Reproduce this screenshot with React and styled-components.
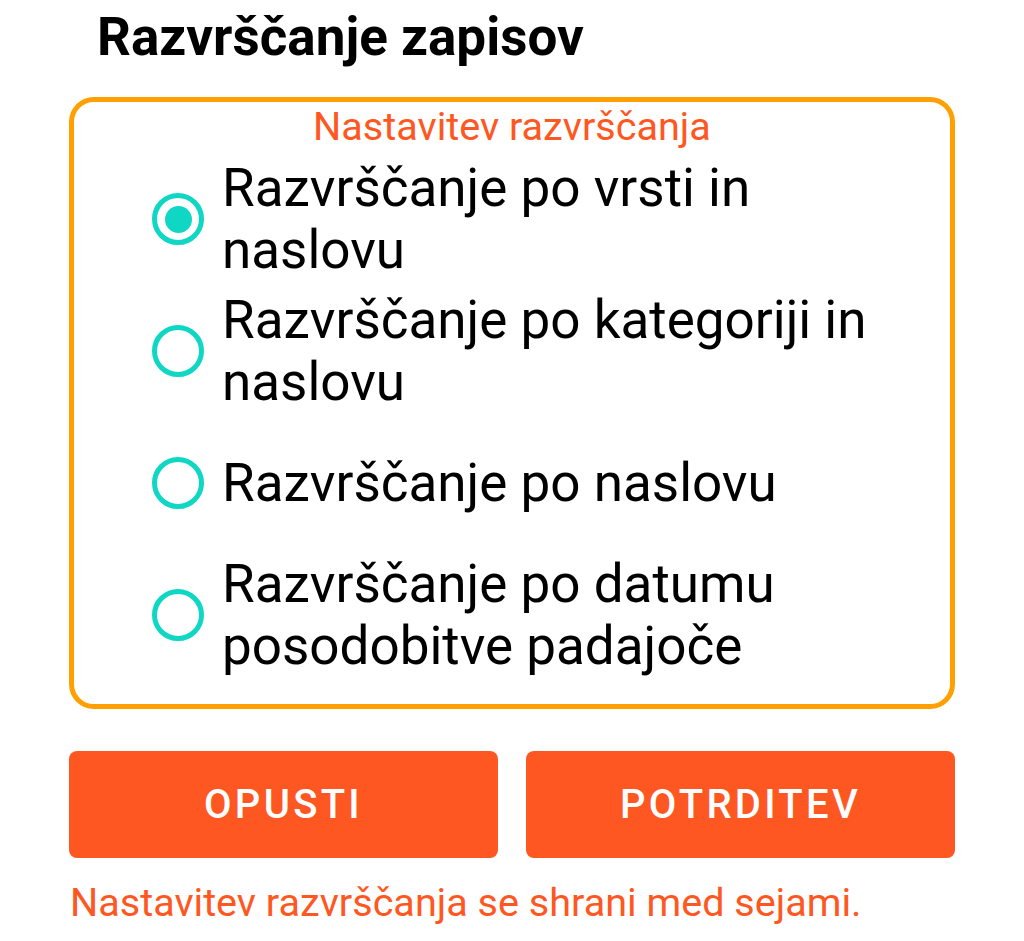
import styled, { createGlobalStyle } from 'styled-components'

const GlobalStyle = createGlobalStyle`
  body {
    margin: 0;
    background: #fff;
    font-family: Roboto, "Noto Sans", sans-serif;
  }
`

const Dialog = styled.div`
  width: 1024px;
  box-sizing: border-box;
  padding: 0 69px;
`

const Title = styled.h1`
  margin: 0;
  padding: 6px 0 0 28px;
  font-size: 53px;
  font-weight: 700;
  line-height: 62px;
  color: #000;
`

const SortBox = styled.div`
  margin-top: 29px;
  border: 5px solid #ffa000;
  border-radius: 25px;
  padding: 1px 29px 23px 78px;
`

const Legend = styled.div`
  margin-left: -49px;
  text-align: center;
  color: #ff5722;
  font-size: 39.6px;
  line-height: 47px;
`

const OptionList = styled.div`
  display: flex;
  flex-direction: column;
  margin-top: 3px;
`

const Option = styled.label`
  display: flex;
  align-items: center;
  min-height: 132px;
  gap: 18px;
  cursor: pointer;
`

const Radio = styled.span`
  flex: none;
  width: 52px;
  height: 52px;
  box-sizing: border-box;
  border: 5px solid #0fd7c4;
  border-radius: 50%;
  display: flex;
  align-items: center;
  justify-content: center;

  &::after {
    content: '';
    width: 27px;
    height: 27px;
    border-radius: 50%;
    background: #0fd7c4;
    display: ${p => (p.$checked ? 'block' : 'none')};
  }
`

const OptionText = styled.span`
  font-size: 53px;
  line-height: 62px;
  color: #000;
`

const Buttons = styled.div`
  display: grid;
  grid-template-columns: 1fr 1fr;
  gap: 28px;
  margin-top: 42px;
`

const Button = styled.button`
  height: 107px;
  border: none;
  border-radius: 8px;
  background: #ff5722;
  color: #fff;
  font-family: inherit;
  font-size: 40px;
  font-weight: 500;
  letter-spacing: 3.3px;
`

const Note = styled.p`
  margin: 21px 0 0 1px;
  color: #ff5722;
  font-size: 39.6px;
  line-height: 47px;
`

const options = [
  'Razvrščanje po vrsti in naslovu',
  'Razvrščanje po kategoriji in naslovu',
  'Razvrščanje po naslovu',
  'Razvrščanje po datumu posodobitve padajoče',
]

const App = () => {
  return (
    <>
      <GlobalStyle />
      <Dialog>
        <Title>Razvrščanje zapisov</Title>
        <SortBox>
          <Legend>Nastavitev razvrščanja</Legend>
          <OptionList>
            {options.map((text, i) => (
              <Option key={text}>
                <Radio $checked={i === 0} />
                <OptionText>{text}</OptionText>
              </Option>
            ))}
          </OptionList>
        </SortBox>
        <Buttons>
          <Button>OPUSTI</Button>
          <Button>POTRDITEV</Button>
        </Buttons>
        <Note>Nastavitev razvrščanja se shrani med sejami.</Note>
      </Dialog>
    </>
  )
}

export default App
